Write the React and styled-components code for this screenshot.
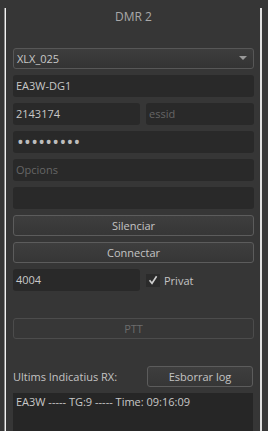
import React from "react";
import styled, { createGlobalStyle } from "styled-components";

const Global = createGlobalStyle`
  html, body { margin: 0; padding: 0; background: #363636; height: 100%; overflow: hidden; }
  body { font-family: "Open Sans", "Noto Sans", sans-serif; font-size: 11px; color: #c4c4c4; }
  * { box-sizing: border-box; }
`;

const Page = styled.div`
  width: 268px;
  height: 431px;
  padding-top: 8px;
  padding-left: 4px;
  background: #363636;
`;

const Panel = styled.div`
  width: 258px;
  height: 440px;
  border-left: 1px solid #8a8a8a;
  border-right: 2px solid #dcdcdc;
  box-shadow: inset 1px 0 0 #f2f2f2;
  padding: 0 6px 0 8px;
  display: flex;
  flex-direction: column;
`;

const Title = styled.div`
  text-align: center;
  font-size: 12px;
  color: #a9a9a9;
  line-height: 16px;
  margin-top: 1px;
  height: 42px;
`;

const Stack = styled.div`
  display: flex;
  flex-direction: column;
  gap: 6px;
`;

const Combo = styled.div`
  height: 21px;
  border: 1px solid #575757;
  border-radius: 3px;
  background: linear-gradient(#3d3d3d, #343434);
  display: flex;
  align-items: center;
  justify-content: space-between;
  padding: 0 6px 0 3px;
  color: #c8c8c8;
`;

const Arrow = styled.span`
  width: 0;
  height: 0;
  border-left: 4px solid transparent;
  border-right: 4px solid transparent;
  border-top: 4px solid #9a9a9a;
`;

const Field = styled.div`
  height: 22px;
  flex: ${(p) => p.$flex || "none"};
  width: ${(p) => p.$w || "auto"};
  background: #292929;
  border-radius: 3px;
  display: flex;
  align-items: center;
  padding: 0 3px;
  color: ${(p) => (p.$placeholder ? "#666666" : "#c8c8c8")};
  white-space: nowrap;
  overflow: hidden;
`;

const Dots = styled.span`
  font-size: 18px;
  line-height: 1;
  letter-spacing: 0.3px;
  color: #bdbdbd;
  margin-left: 1px;
`;

const Row = styled.div`
  display: flex;
  gap: 6px;
  align-items: center;
`;

const Button = styled.div`
  height: 21px;
  width: ${(p) => p.$w || "auto"};
  border: 1px solid ${(p) => (p.$disabled ? "#4c4c4c" : "#5c5c5c")};
  border-radius: 3px;
  background: ${(p) =>
    p.$disabled ? "#373737" : "linear-gradient(#3e3e3e, #363636)"};
  display: flex;
  align-items: center;
  justify-content: center;
  color: ${(p) => (p.$disabled ? "#6c6c6c" : "#c4c4c4")};
`;

const Check = styled.label`
  display: flex;
  align-items: center;
  gap: 4px;
  color: #c4c4c4;
  padding-top: 1px;
`;

const Box = styled.span`
  width: 14px;
  height: 13px;
  background: #2b2b2b;
  display: flex;
  align-items: center;
  justify-content: center;
`;

const PTTWrap = styled.div`
  margin-top: 27px;
`;

const LogHeader = styled.div`
  margin-top: 27px;
  display: flex;
  align-items: center;
  justify-content: space-between;
  padding-right: 1px;
`;

const Label = styled.span`
  color: #c4c4c4;
  padding-top: 1px;
`;

const Log = styled.div`
  margin-top: 6px;
  margin-right: 1px;
  height: 60px;
  background: #262626;
  padding: 1px 3px;
  color: #c8c8c8;
  font-size: 11px;
`;

export default function App() {
  return (
    <>
      <Global />
      <Page>
        <Panel>
          <Title>DMR 2</Title>
          <Stack>
            <Combo>
              <span>XLX_025</span>
              <Arrow />
            </Combo>
            <Field>EA3W-DG1</Field>
            <Row>
              <Field $w="127px">2143174</Field>
              <Field $flex="1" $placeholder>essid</Field>
            </Row>
            <Field>
              <Dots>•••••••••</Dots>
            </Field>
            <Field $placeholder>Opcions</Field>
            <Field />
            <Button>Silenciar</Button>
            <Button>Connectar</Button>
            <Row>
              <Field $w="127px">4004</Field>
              <Check>
                <Box>
                  <svg width="10" height="10" viewBox="0 0 10 10">
                    <path d="M1.5 5.2 L4 8.3 L8.6 1.2" fill="none" stroke="#cfcfcf" strokeWidth="1.6" />
                  </svg>
                </Box>
                Privat
              </Check>
            </Row>
          </Stack>
          <PTTWrap>
            <Button $disabled>PTT</Button>
          </PTTWrap>
          <LogHeader>
            <Label>Ultims Indicatius RX:</Label>
            <Button $w="106px">Esborrar log</Button>
          </LogHeader>
          <Log>EA3W ----- TG:9 ----- Time: 09:16:09</Log>
        </Panel>
      </Page>
    </>
  );
}
